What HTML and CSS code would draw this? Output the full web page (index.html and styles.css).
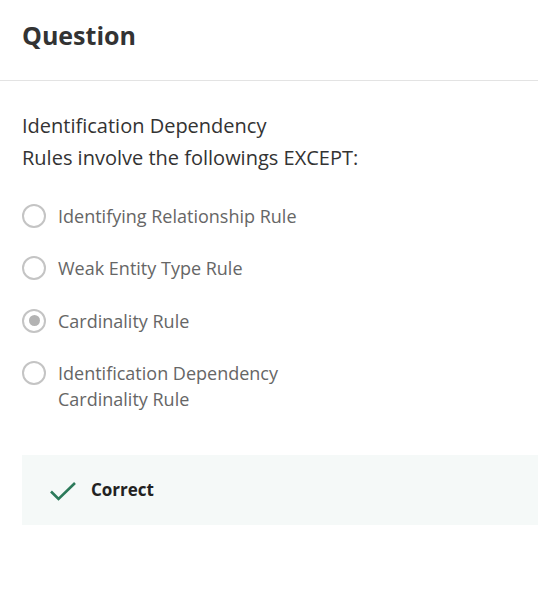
FILE: index.html
```html
<!DOCTYPE html>
<html>
<head>
<meta charset="utf-8">
<link rel="stylesheet" href="styles.css">
</head>
<body>
<div class="page">
  <header class="header">
    <h1 class="title">Question</h1>
  </header>
  <section class="body">
    <p class="prompt">Identification Dependency<br>Rules involve the followings EXCEPT:</p>
    <ul class="options">
      <li class="option"><span class="radio"></span><span class="label">Identifying Relationship Rule</span></li>
      <li class="option"><span class="radio"></span><span class="label">Weak Entity Type Rule</span></li>
      <li class="option"><span class="radio checked"></span><span class="label">Cardinality Rule</span></li>
      <li class="option"><span class="radio"></span><span class="label">Identification Dependency<br>Cardinality Rule</span></li>
    </ul>
    <div class="result">
      <svg class="check" width="28" height="20" viewBox="0 0 28 20"><path d="M2 10.5 L9.5 18 L26 2" fill="none" stroke="#2b7a5a" stroke-width="2.6"/></svg>
      <span class="result-text">Correct</span>
    </div>
  </section>
</div>
</body>
</html>
```
FILE: styles.css
```css
* { box-sizing: border-box; }
html, body { margin: 0; padding: 0; background: #fff; }
body { font-family: "Open Sans", "Noto Sans", sans-serif; color: #333; }
.page { width: 538px; }
.header { height: 81px; border-bottom: 1px solid #e3e3e3; padding: 17px 22px 0; }
.title { margin: 0; font-size: 25px; font-weight: 700; line-height: 36px; color: #333; }
.body { padding: 29px 0 0 22px; }
.prompt { margin: 0; font-size: 20px; line-height: 32px; color: #333; }
.options { list-style: none; margin: 30px 0 0; padding: 0; display: flex; flex-direction: column; gap: 27.3px; }
.option { display: flex; align-items: flex-start; gap: 12px; }
.radio { width: 24px; height: 24px; border: 2px solid #c4c4c4; border-radius: 50%; flex: none; display: flex; align-items: center; justify-content: center; }
.radio.checked::after { content: ""; width: 11px; height: 11px; border-radius: 50%; background: #b3b3b3; }
.label { font-size: 18px; line-height: 26px; color: #666; margin-top: -1px; }
.result { margin-top: 43px; height: 70px; background: #f5f9f8; display: flex; align-items: center; padding-left: 27px; gap: 14px; }
.check { flex: none; margin-top: 2px; }
.result-text { font-size: 17px; font-weight: 700; color: #222; }
```
